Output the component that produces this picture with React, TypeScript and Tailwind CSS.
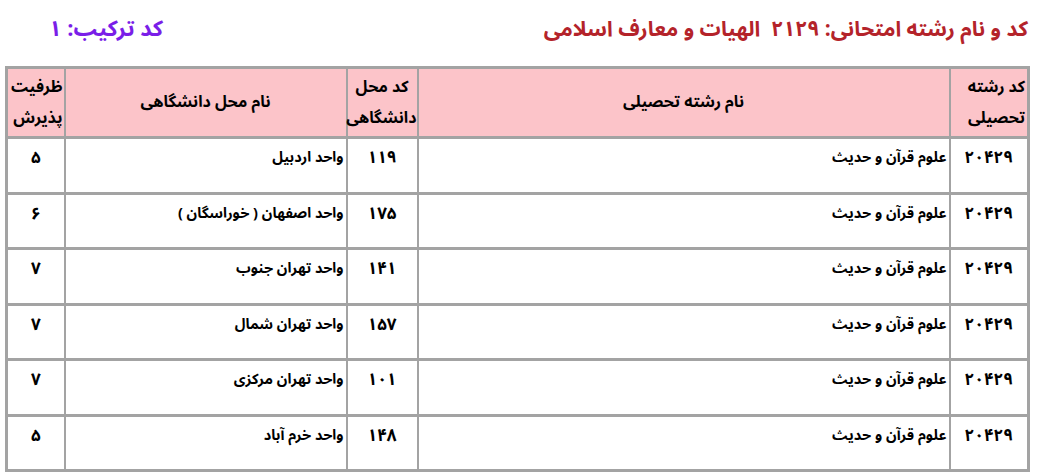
import React from "react";

const rows = [
  { field: "۲۰۴۲۹", fieldName: "علوم قرآن و حدیث", code: "۱۱۹", uni: "واحد اردبیل", cap: "۵" },
  { field: "۲۰۴۲۹", fieldName: "علوم قرآن و حدیث", code: "۱۷۵", uni: "واحد اصفهان ( خوراسگان )", cap: "۶" },
  { field: "۲۰۴۲۹", fieldName: "علوم قرآن و حدیث", code: "۱۴۱", uni: "واحد تهران جنوب", cap: "۷" },
  { field: "۲۰۴۲۹", fieldName: "علوم قرآن و حدیث", code: "۱۵۷", uni: "واحد تهران شمال", cap: "۷" },
  { field: "۲۰۴۲۹", fieldName: "علوم قرآن و حدیث", code: "۱۰۱", uni: "واحد تهران مرکزی", cap: "۷" },
  { field: "۲۰۴۲۹", fieldName: "علوم قرآن و حدیث", code: "۱۴۸", uni: "واحد خرم آباد", cap: "۵" },
];

export default function App() {
  return (
    <div
      dir="rtl"
      className="w-[1037px] h-[472px] bg-white overflow-hidden px-[7px] pt-[13px]"
      style={{ fontFamily: '"Noto Sans Arabic", "DejaVu Sans", sans-serif' }}
    >
      <div className="flex items-start justify-between h-[53px] px-[2px]">
        <div className="text-[#b4232a] text-[21px] font-bold leading-[32px]">
          کد و نام رشته امتحانی: ۲۱۲۹&nbsp;&nbsp;الهیات و معارف اسلامی
        </div>
        <div className="text-[#7a1ee8] text-[22px] font-bold leading-[32px] ml-[40px]">
          کد ترکیب: ۱
        </div>
      </div>
      <table className="w-[1024px] border-collapse border-[3px] border-[#a3a3a3] table-fixed">
        <colgroup>
          <col className="w-[79px]" />
          <col className="w-[532px]" />
          <col className="w-[71px]" />
          <col className="w-[282px]" />
          <col className="w-[58px]" />
        </colgroup>
        <thead>
          <tr className="h-[70px] bg-[#fcc4c9] text-black font-bold text-[16px] leading-[31px]">
            <th className="border-2 border-[#a3a3a3] text-right px-[2px] font-bold">کد رشته<br />تحصیلی</th>
            <th className="border-2 border-[#a3a3a3] text-center font-bold">نام رشته تحصیلی</th>
            <th className="border-2 border-[#a3a3a3] text-center font-bold">کد محل<br />دانشگاهی</th>
            <th className="border-2 border-[#a3a3a3] text-center font-bold">نام محل دانشگاهی</th>
            <th className="border-2 border-[#a3a3a3] text-right px-[1px] font-bold">ظرفیت<br />پذیرش</th>
          </tr>
        </thead>
        <tbody>
          {rows.map((r, i) => (
            <tr key={i} className="h-[55.5px] text-black font-bold">
              <td className="border-2 border-y-[3px] border-[#a3a3a3] align-top text-center pt-[8px] text-[17px] leading-[22px]">{r.field}</td>
              <td className="border-2 border-y-[3px] border-[#a3a3a3] align-top text-right pt-[8px] pr-[2px] text-[14.5px] leading-[22px]">{r.fieldName}</td>
              <td className="border-2 border-y-[3px] border-[#a3a3a3] align-top text-center pt-[8px] text-[17px] leading-[22px]">{r.code}</td>
              <td className="border-2 border-y-[3px] border-[#a3a3a3] align-top text-right pt-[8px] pr-[2px] text-[14.5px] leading-[22px]">{r.uni}</td>
              <td className="border-2 border-y-[3px] border-[#a3a3a3] align-top text-center pt-[8px] text-[17px] leading-[22px]">{r.cap}</td>
            </tr>
          ))}
        </tbody>
      </table>
    </div>
  );
}
